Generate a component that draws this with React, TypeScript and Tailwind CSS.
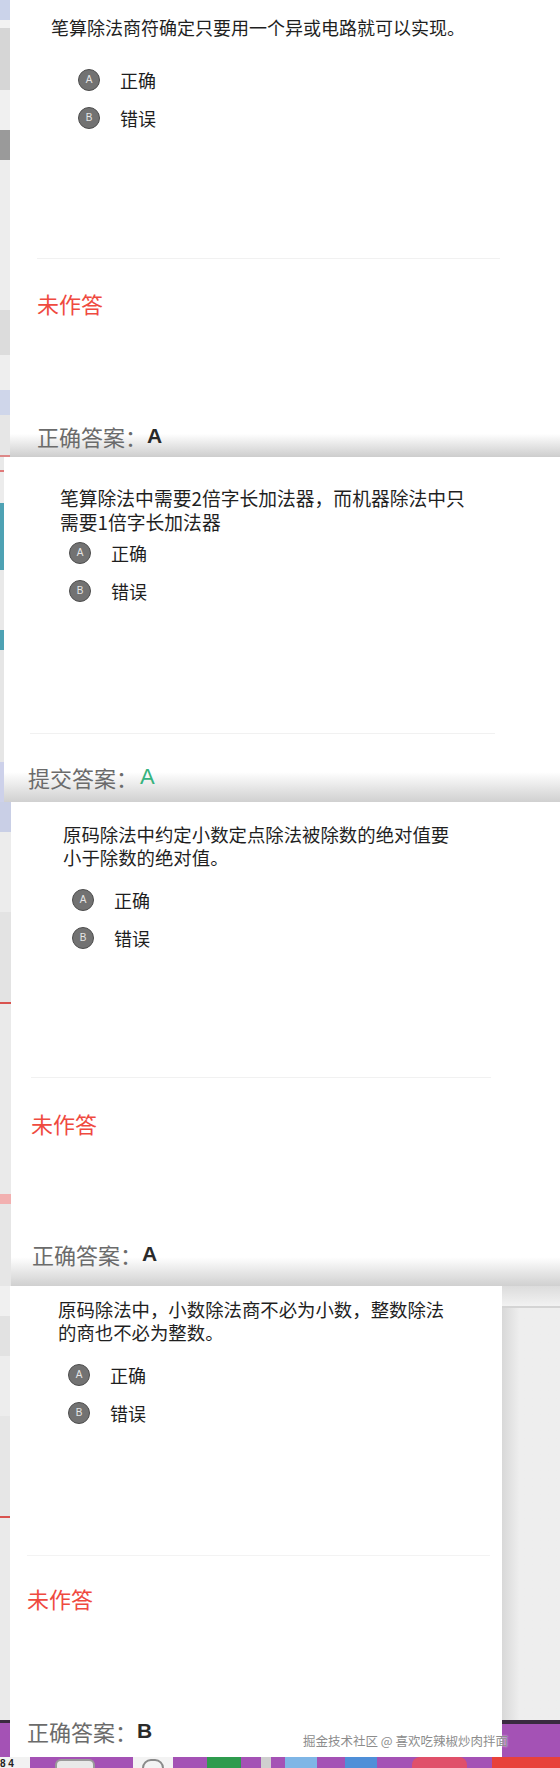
import React from "react";

const FONT = "font-['Noto_Sans_CJK_SC','Liberation_Sans',sans-serif]";

function Circle({ l }: { l: string }) {
  return (
    <span className="flex h-[22px] w-[22px] shrink-0 items-center justify-center rounded-full border border-[#4d4d4d] bg-[#727272] font-['Liberation_Sans',sans-serif] text-[10px] leading-none text-[#e6e6e6]">
      {l}
    </span>
  );
}

function Options({ pl, mt }: { pl: string; mt: string }) {
  return (
    <div className={`${pl} ${mt} flex flex-col`}>
      <div className="flex h-[38px] items-center gap-[20px]">
        <Circle l="A" />
        <span className="text-[18px] leading-[24px] text-[#1e1e1e]">正确</span>
      </div>
      <div className="flex h-[38px] items-center gap-[20px]">
        <Circle l="B" />
        <span className="text-[18px] leading-[24px] text-[#1e1e1e]">错误</span>
      </div>
    </div>
  );
}

function Strip({ w, children }: { w: string; children?: React.ReactNode }) {
  return <div className={`${w} flex shrink-0 flex-col overflow-hidden bg-[#e8e8e8]`}>{children}</div>;
}

export default function App() {
  return (
    <div className={`${FONT} relative h-[1768px] w-[560px] overflow-hidden bg-[#e8e8e8]`}>
      {/* Panel 1 */}
      <div className="flex h-[457px]">
        <Strip w="w-[10px]">
          <div className="h-[20px] bg-[#cbd3ea]" />
          <div className="h-[8px] bg-[#f2f2f2]" />
          <div className="h-[62px] bg-[#d6d6d6]" />
          <div className="h-[40px] bg-[#f0f0f0]" />
          <div className="h-[30px] bg-[#9a9a9a]" />
          <div className="h-[150px] bg-[#ededed]" />
          <div className="h-[45px] bg-[#dcdcdc]" />
          <div className="h-[35px] bg-[#eeeeee]" />
          <div className="h-[25px] bg-[#cfd6ea]" />
          <div className="flex-1 bg-[#e6e6e6]" />
          <div className="h-[2px] bg-[#d88]" />
        </Strip>
        <div className="flex w-[550px] flex-col bg-white">
          <div className="whitespace-nowrap pl-[41px] pt-[15px] text-[18px] leading-[24px] text-[#1f1f1f]">
            笔算除法商符确定只要用一个异或电路就可以实现。
          </div>
          <Options pl="pl-[68px]" mt="mt-[22px]" />
          <div className="ml-[27px] mt-[121px] h-px w-[463px] bg-[#f1f1f1]" />
          <div className="mt-[29px] pl-[27px] text-[22px] leading-[30px] text-[#ef4a3f]">未作答</div>
          <div className="mt-auto flex h-[42px] items-center bg-linear-to-b from-white via-white via-45% to-[#cdcdcd] pl-[27px]">
            <span className="text-[22px] leading-[30px] text-[#6b6b6b]">正确答案：</span>
            <span className="font-['Liberation_Sans',sans-serif] text-[21px] font-bold leading-[30px] text-[#2a2a2a]">A</span>
          </div>
        </div>
      </div>

      {/* Panel 2 */}
      <div className="flex h-[345px]">
        <Strip w="w-[4px]">
          <div className="h-[13px] bg-[#e9e9e9]" />
          <div className="h-[2px] bg-[#e07a7a]" />
          <div className="h-[31px] bg-[#ececec]" />
          <div className="h-[67px] bg-[#4ea2b4]" />
          <div className="h-[60px] bg-[#e9e9e9]" />
          <div className="h-[20px] bg-[#4ea2b4]" />
          <div className="flex-1 bg-[#e6e6e6]" />
          <div className="h-[40px] bg-[#cdd1ea]" />
        </Strip>
        <div className="flex w-[556px] flex-col bg-white">
          <div className="whitespace-nowrap pl-[56px] pt-[29px] text-[18.8px] leading-[24px] text-[#1f1f1f]">
            笔算除法中需要2倍字长加法器，而机器除法中只
            <br />
            需要1倍字长加法器
          </div>
          <Options pl="pl-[65px]" mt="mt-0" />
          <div className="ml-[26px] mt-[123px] h-px w-[465px] bg-[#f1f1f1]" />
          <div className="mt-auto flex h-[50px] items-center bg-linear-to-b from-white via-white via-40% to-[#d0d0d0] pl-[24px]">
            <span className="text-[22px] leading-[30px] text-[#6b6b6b]">提交答案：</span>
            <span className="ml-[2px] font-['Liberation_Sans',sans-serif] text-[22px] leading-[30px] text-[#36b37e]">A</span>
          </div>
        </div>
      </div>

      {/* Panel 3 */}
      <div className="flex h-[484px]">
        <Strip w="w-[11px]">
          <div className="h-[30px] bg-[#c9cfe6]" />
          <div className="h-[80px] bg-[#ececec]" />
          <div className="h-[90px] bg-[#e3e3e3]" />
          <div className="h-[2px] bg-[#d9534f]" />
          <div className="h-[190px] bg-[#eaeaea]" />
          <div className="h-[10px] bg-[#f2b0b0]" />
          <div className="flex-1 bg-[#e6e6e6]" />
        </Strip>
        <div className="flex w-[549px] flex-col bg-white">
          <div className="whitespace-nowrap pl-[52px] pt-[21px] text-[18.4px] leading-[23px] text-[#1f1f1f]">
            原码除法中约定小数定点除法被除数的绝对值要
            <br />
            小于除数的绝对值。
          </div>
          <Options pl="pl-[61px]" mt="mt-[12px]" />
          <div className="ml-[20px] mt-[120px] h-px w-[460px] bg-[#f1f1f1]" />
          <div className="mt-[30px] pl-[20px] text-[22px] leading-[30px] text-[#ef4a3f]">未作答</div>
          <div className="mt-auto flex h-[64px] items-center bg-linear-to-b from-white via-white via-55% to-[#d0d0d0] pl-[21px]">
            <span className="text-[22px] leading-[30px] text-[#6b6b6b]">正确答案：</span>
            <span className="font-['Liberation_Sans',sans-serif] text-[21px] font-bold leading-[30px] text-[#2a2a2a]">A</span>
          </div>
        </div>
      </div>

      {/* Panel 4 */}
      <div className="relative flex h-[471px]">
        <Strip w="w-[10px]">
          <div className="h-[30px] bg-[#f0f0f0]" />
          <div className="h-[40px] bg-[#e2e2e2]" />
          <div className="h-[60px] bg-[#ededed]" />
          <div className="h-[100px] bg-[#e6e6e6]" />
          <div className="h-[2px] bg-[#d9534f]" />
          <div className="flex-1 bg-[#eaeaea]" />
          <div className="h-[3px] bg-[#3a2a40]" />
          <div className="h-[34px] bg-[#a452b5]" />
        </Strip>
        <div className="flex w-[492px] flex-col bg-white">
          <div className="whitespace-nowrap pl-[48px] pt-[12px] text-[18.4px] leading-[23px] text-[#1f1f1f]">
            原码除法中，小数除法商不必为小数，整数除法
            <br />
            的商也不必为整数。
          </div>
          <Options pl="pl-[58px]" mt="mt-[12px]" />
          <div className="ml-[17px] mt-[123px] h-px w-[463px] bg-[#f3f3f3]" />
          <div className="mt-[27px] pl-[17px] text-[22px] leading-[30px] text-[#ef4a3f]">未作答</div>
          <div className="mt-auto flex h-[52px] items-center pl-[17px]">
            <span className="text-[22px] leading-[30px] text-[#6b6b6b]">正确答案：</span>
            <span className="font-['Liberation_Sans',sans-serif] text-[21px] font-bold leading-[30px] text-[#2a2a2a]">B</span>
          </div>
        </div>
        <div className="flex w-[58px] flex-col">
          <div className="h-[20px] bg-linear-to-b from-[#dcdcdc] to-[#f2f2f2]" />
          <div className="h-[2px] bg-[#d4d4d4]" />
          <div className="flex-1 bg-linear-to-r from-[#d8d8d8] via-[#eeeeee] via-30% to-[#eeeeee]" />
          <div className="h-[4px] bg-[#3a2a40]" />
          <div className="h-[33px] bg-[#a452b5]" />
        </div>
        <div className="absolute bottom-[8px] left-[303px] whitespace-nowrap text-[12.5px] leading-[16px] text-[#8c8c8c] [text-shadow:0_0_2px_#fff]">
          掘金技术社区 @ 喜欢吃辣椒炒肉拌面
        </div>
      </div>

      {/* Dock strip */}
      <div className="flex h-[11px] items-end bg-[#a452b5]">
        <div className="h-[11px] w-[30px] bg-[#f2f2f2] font-['Liberation_Sans',sans-serif] text-[10px] font-bold leading-[14px] text-[#222]">8 4</div>
        <div className="w-[25px]" />
        <div className="h-[9px] w-[40px] rounded-t-[6px] border-x-2 border-t-2 border-[#9a9a9a] bg-[#e9e9e9]" />
        <div className="w-[38px]" />
        <div className="h-[11px] w-[40px] bg-[#f3f3f3]">
          <div className="mx-auto mt-[2px] h-[18px] w-[22px] rounded-full border-2 border-[#8a8a8a]" />
        </div>
        <div className="w-[34px]" />
        <div className="h-[11px] w-[34px] bg-[#2e9b4e]" />
        <div className="w-[20px]" />
        <div className="h-[11px] w-[10px] bg-[#cfcfcf]" />
        <div className="w-[14px]" />
        <div className="h-[11px] w-[32px] bg-[#7fb6e6]" />
        <div className="w-[28px]" />
        <div className="h-[11px] w-[32px] bg-[#4f8fd8]" />
        <div className="w-[35px]" />
        <div className="h-[11px] w-[55px] rounded-t-[8px] bg-[#e0506a]" />
        <div className="w-[25px]" />
        <div className="h-[11px] flex-1 bg-[#e8413a]" />
      </div>
    </div>
  );
}
